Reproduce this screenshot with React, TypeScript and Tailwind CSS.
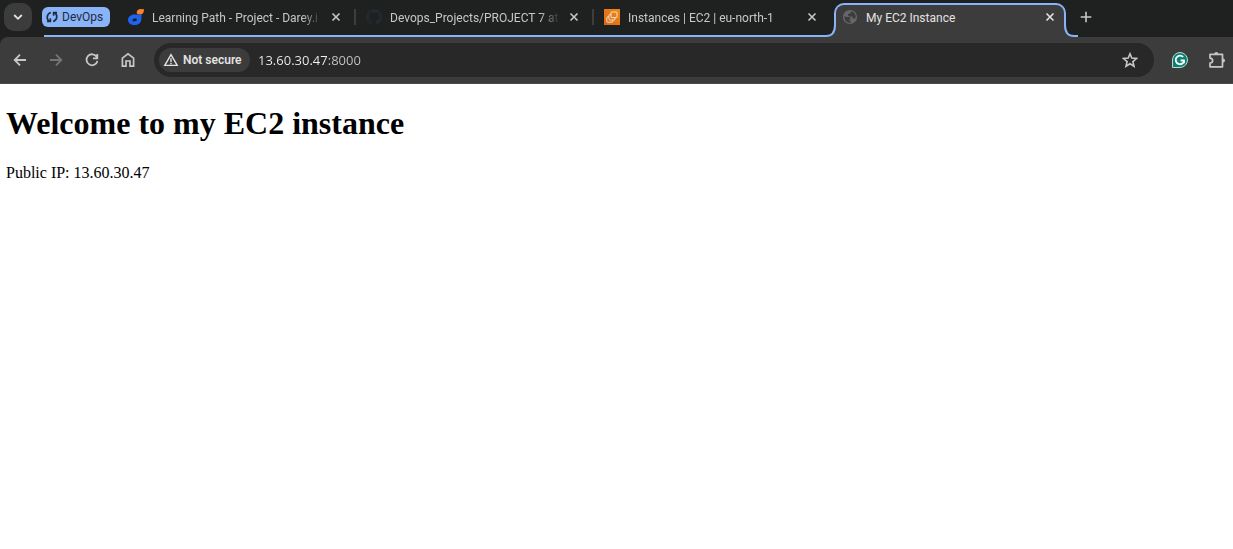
import React from "react";

const toolButton = "flex size-9 shrink-0 items-center justify-center text-[#c7c7c7]";

function CloseButton({ label, active = false }: { label: string; active?: boolean }) {
  return (
    <button type="button" aria-label={`Close ${label}`} className={`flex size-4 shrink-0 items-center justify-center ${active ? "text-[#e3e3e3]" : "text-[#c7c7c7]"}`}>
      <svg width="16" height="16" viewBox="0 0 16 16" fill="none" stroke="currentColor" strokeWidth="1.6">
        <path d="M4.5 4.5l7 7M11.500 4.500l-7 7" />
      </svg>
    </button>
  );
}

function Tab({ title, icon, divider = true }: { title: string; icon: React.ReactNode; divider?: boolean }) {
  return (
    <div className={`flex h-4 w-[238px] min-w-0 items-center border-r-2 px-[10px] ${divider ? "border-[#3c3d3d]" : "border-transparent"}`}>
      {icon}
      <a href="#tab" className="ml-2 min-w-0 flex-1 whitespace-nowrap pt-[2px] text-xs leading-4 text-[#c7c7c7] [mask-image:linear-gradient(to_right,black_150px,transparent_170px)]">
        {title}
      </a>
      <span className="w-2 shrink-0" />
      <CloseButton label={title} />
    </div>
  );
}

function DareyIcon() {
  return (
    <svg className="shrink-0" width="16" height="16" viewBox="0 0 16 16">
      <path fill="#1f63f0" d="M9.3 5.6C10.5 5.7 12.4 5 13.7 5.2C13.2 6.7 13.7 9 13.3 11.2C12.7 14 10.1 16 6.7 16C3 16 0 14 0 10.9C0 7.8 3 5.5 6.4 5.5Z" />
      <ellipse cx="6.6" cy="10.9" rx="2.3" ry="1.5" fill="#1f2020" transform="rotate(-12 6.6 10.9)" />
      <path fill="#ff8126" d="M8.7 3.8C8.7 1.2 10.4.1 12.6.1L16 .3C15.8 4 14.8 5.3 12 5.3C10 5.3 8.7 5 8.7 3.8Z" />
    </svg>
  );
}

function GithubIcon() {
  return (
    <svg className="shrink-0" width="16" height="16" viewBox="0 0 16 16" fill="#24292f">
      <path d="M8 0C3.58 0 0 3.58 0 8c0 3.54 2.29 6.53 5.47 7.59.4.07.55-.17.55-.38 0-.19-.01-.82-.01-1.49-2.01.37-2.53-.49-2.69-.94-.09-.23-.48-.94-.82-1.13-.28-.15-.68-.52-.01-.53.63-.01 1.08.58 1.23.82.72 1.21 1.87.87 2.33.66.07-.52.28-.87.51-1.07-1.78-.2-3.64-.89-3.64-3.95 0-.87.31-1.59.82-2.15-.08-.2-.36-1.02.08-2.12 0 0 .67-.21 2.2.82A7.5 7.5 0 0 1 8 3.86c.68 0 1.36.09 2 .27 1.53-1.04 2.2-.82 2.2-.82.44 1.1.16 1.92.08 2.12.51.56.82 1.27.82 2.15 0 3.07-1.87 3.75-3.65 3.95.29.25.54.73.54 1.48 0 1.07-.01 1.93-.01 2.2 0 .21.15.46.55.38A8.01 8.01 0 0 0 16 8c0-4.42-3.58-8-8-8Z" />
    </svg>
  );
}

function Ec2Icon() {
  return (
    <svg className="shrink-0" width="16" height="16" viewBox="0 0 16 16" fill="none">
      <defs>
        <linearGradient id="ec2" x1="0" y1="16" x2="16" y2="0" gradientUnits="userSpaceOnUse">
          <stop stopColor="#d86613" />
          <stop offset="1" stopColor="#f08a18" />
        </linearGradient>
      </defs>
      <path fill="url(#ec2)" d="M0 0h16v16H0z" />
      <g stroke="#fff" strokeWidth=".9" strokeOpacity=".85">
        <rect x="7" y="3" width="6" height="5.6" rx=".8" />
        <path d="M6.800 5.600H5.800a.8.8 0 0 0-.8.8v3.800c0 .4.4.8.8.8h4.400a.8.8 0 0 0 .8-.8V8.800" />
        <path d="M4.800 7.800H3.600a.8.8 0 0 0-.8.8v3.800c0 .4.4.8.8.8H8a.8.8 0 0 0 .8-.8v-1.200" />
      </g>
    </svg>
  );
}

function GlobeIcon() {
  return (
    <svg className="shrink-0" width="16" height="16" viewBox="0 0 16 16">
      <circle cx="8" cy="8" r="7.1" fill="#63666a" />
      <path fill="#3c3c3c" d="M2.300 7.300L5.200 8.100h1.900c.8 0 1.400.7 1.400 1.500v.8H7.200v1.400h.9c.4 0 .6.3.6.7v1.300C5.200 14.200 2.100 11.300 2.300 7.300ZM8.800 2.300C11 2.500 13 4.200 13.600 6.600L13.800 8.200C13.400 9.100 12.900 9.600 12 9.600c-.9 0-1.500-.6-1.500-1.400V7.400H7.600c-.9 0-1.500-.7-1.500-1.500 0-.8.6-1.400 1.500-1.400h1.200Z" />
    </svg>
  );
}

function ActiveTab() {
  return (
    <div className="relative mt-[3px] h-[34px] w-[232px] shrink-0 rounded-t-[10px] border-2 border-b-0 border-[#8ab4f8] bg-[#3c3c3c] px-[6px]">
      <svg className="absolute -left-[10px] bottom-0" width="10" height="12" viewBox="0 0 10 12" fill="none">
        <path fill="#3c3c3c" d="M0 12V11C6 11 9 7 9 0H10V12Z" />
        <path stroke="#8ab4f8" strokeWidth="2" d="M0 11C6 11 9 7 9 0" />
      </svg>
      <svg className="absolute -right-[14px] bottom-0" width="14" height="12" viewBox="0 0 14 12" fill="none">
        <path fill="#3c3c3c" d="M14 12V11C6 11 1 8 1 0H0V12Z" />
        <path stroke="#8ab4f8" strokeWidth="2" d="M1 0C1 8 5 11 10 11H14" />
      </svg>
      <div className="flex h-6 items-center">
        <GlobeIcon />
        <a href="#active" className="ml-2 min-w-0 flex-1 whitespace-nowrap pt-[2px] text-xs leading-4 text-[#e3e3e3]">My EC2 Instance</a>
        <CloseButton label="My EC2 Instance" active />
      </div>
    </div>
  );
}

function TabStrip() {
  return (
    <div className="flex h-[37px] items-start bg-[#1f2020] pl-1 font-[Roboto,sans-serif]">
      <button type="button" aria-label="Search tabs" className="mt-[3px] flex size-7 shrink-0 items-center justify-center rounded-[10px] bg-[#3c3c3c] text-[#e3e3e3]">
        <svg width="12" height="12" viewBox="0 0 12 12" fill="none" stroke="currentColor" strokeWidth="1.8"><path d="M2.2 4L6 7.8 9.8 4" /></svg>
      </button>
      <div className="relative ml-[10px] flex h-[37px] min-w-0 items-start pr-[2px]">
        <span className="absolute bottom-0 left-[2px] right-2 h-[2px] bg-[#8ab4f8]" />
        <button type="button" className="mt-[7px] flex h-5 w-[68px] shrink-0 items-center gap-1 rounded-md bg-[#8ab4f8] pl-1 text-xs leading-4 text-[#1f2a3c]">
          <svg className="shrink-0" width="12" height="12" viewBox="0 0 12 12" fill="none" stroke="currentColor" strokeWidth="1.6">
            <path d="M4.8 1.5C.3 3 .2 8.5 3.6 10.5M1 10.5h3.4V7.2M7.2 10.5C11.7 9 11.8 3.5 8.4 1.5M11 1.5H7.6v3.3" />
          </svg>
          DevOps
        </button>
        <div className="ml-2 mt-[9px] flex min-w-0">
          <Tab title="Learning Path - Project - Darey.i" icon={<DareyIcon />} />
          <Tab title="Devops_Projects/PROJECT 7 at r" icon={<GithubIcon />} />
          <Tab title="Instances | EC2 | eu-north-1" icon={<Ec2Icon />} divider={false} />
        </div>
      </div>
      <ActiveTab />
      <button type="button" aria-label="New tab" className="ml-3 mt-[9px] flex size-4 items-center justify-center text-[#c7c7c7]">
        <svg width="12" height="12" viewBox="0 0 12 12" stroke="currentColor" strokeWidth="1.6"><path d="M6 .7v10.6M.7 6h10.6" /></svg>
      </button>
    </div>
  );
}

function Toolbar() {
  return (
    <div className="bg-[#1f2020]">
      <div className="flex h-[47px] items-center rounded-tl-lg border-b border-[#4a4a4a] bg-[#3c3c3c] pl-[2px]">
        <button type="button" aria-label="Back" className={toolButton}>
          <svg width="16" height="16" viewBox="0 0 16 16" fill="none" stroke="currentColor" strokeWidth="1.8"><path d="M14 8H3M8 2.7L2.7 8 8 13.3" /></svg>
        </button>
        <button type="button" aria-label="Forward" disabled className="flex size-9 shrink-0 items-center justify-center text-[#757575]">
          <svg width="16" height="16" viewBox="0 0 16 16" fill="none" stroke="currentColor" strokeWidth="1.8"><path d="M2 8h11M8 2.7L13.3 8 8 13.3" /></svg>
        </button>
        <button type="button" aria-label="Reload" className={toolButton}>
          <svg width="16" height="16" viewBox="0 0 16 16" fill="none" stroke="currentColor" strokeWidth="1.8"><path d="M12.8 5A5.5 5.5 0 1 0 13.4 9M13.3 2v4.3H9" /></svg>
        </button>
        <button type="button" aria-label="Home" className={toolButton}>
          <svg width="16" height="16" viewBox="0 0 16 16" fill="none" stroke="currentColor" strokeWidth="1.7"><path d="M2.4 6.2L8 1.9l5.6 4.3v8H10V9H6v5.2H2.4Z" /></svg>
        </button>
        <div className="ml-2 flex h-[34px] min-w-0 flex-1 items-center rounded-full bg-[#282828] pl-[5px] pr-4">
          <button type="button" className="flex h-6 w-[91px] shrink-0 items-center gap-1 rounded-full bg-[#3c3c3c] pl-1 font-[Roboto,sans-serif] text-xs font-semibold leading-4 text-[#e3e3e3]">
            <svg className="shrink-0" width="16" height="16" viewBox="0 0 16 16" fill="none" stroke="currentColor" strokeWidth="1.4"><path d="M8 2.7l6.2 10.7H1.8ZM8 6.2v3.7M8 10.8v1.4" /></svg>
            <span className="whitespace-nowrap">Not secure</span>
          </button>
          <div className="ml-2 min-w-0 flex-1 text-[13px] leading-5">
            <input aria-label="Address" defaultValue="13.60.30.47:8000" className="w-full bg-[linear-gradient(to_right,#f1f1f1_69px,#c7c7c7_69px)] bg-clip-text text-transparent caret-white outline-none" />
          </div>
          <button type="button" aria-label="Bookmark this page" className="shrink-0 text-[#c7c7c7]">
            <svg width="16" height="16" viewBox="0 0 16 16" fill="none" stroke="currentColor" strokeWidth="1.6"><path d="M8 1.8l1.8 4.3 4.7.4-3.6 3.1 1.1 4.6L8 11.7l-4 2.5 1.1-4.6-3.6-3.1 4.7-.4Z" /></svg>
          </button>
        </div>
        <button type="button" aria-label="Grammarly" className="ml-[18px] shrink-0">
          <svg width="16" height="16" viewBox="0 0 16 16" fill="none">
            <path d="M8 .5A7.5 7.5 0 1 1 8 15.5H.5V8A7.5 7.5 0 0 1 8 .5Z" fill="#0b826f" stroke="#b5dbd4" />
            <path d="M11.2 5A4.300 4.300 0 1 0 12.300 8.500M12.800 8.500H8.600M12 8.700v2.600" stroke="#fff" strokeWidth="1.8" />
          </svg>
        </button>
        <button type="button" aria-label="Extensions" className="ml-5 mr-[7px] shrink-0 text-[#c7c7c7]">
          <svg width="18" height="18" viewBox="0 0 18 18" fill="none" stroke="currentColor" strokeWidth="1.7" strokeLinejoin="round"><path d="M2 3.3h12.500v12.500H2v-3.700c3.500-.2 3.500-4.800 0-5Z" /><path fill="currentColor" stroke="none" d="M6.300 3a2 2 0 0 1 4 0ZM15 7.500a2 2 0 0 1 0 4Z" /></svg>
        </button>
      </div>
    </div>
  );
}

export default function App() {
  return (
    <div className="min-h-screen bg-white font-['Open_Sans',sans-serif]">
      <header>
        <TabStrip />
        <Toolbar />
      </header>
      <main className="px-[6px] pt-[21px] font-['Liberation_Serif',serif] text-black">
        <h1 className="text-[32px] font-bold leading-9">Welcome to my EC2 instance</h1>
        <p className="mt-[22px] text-base leading-5">Public IP: 13.60.30.47</p>
      </main>
    </div>
  );
}
